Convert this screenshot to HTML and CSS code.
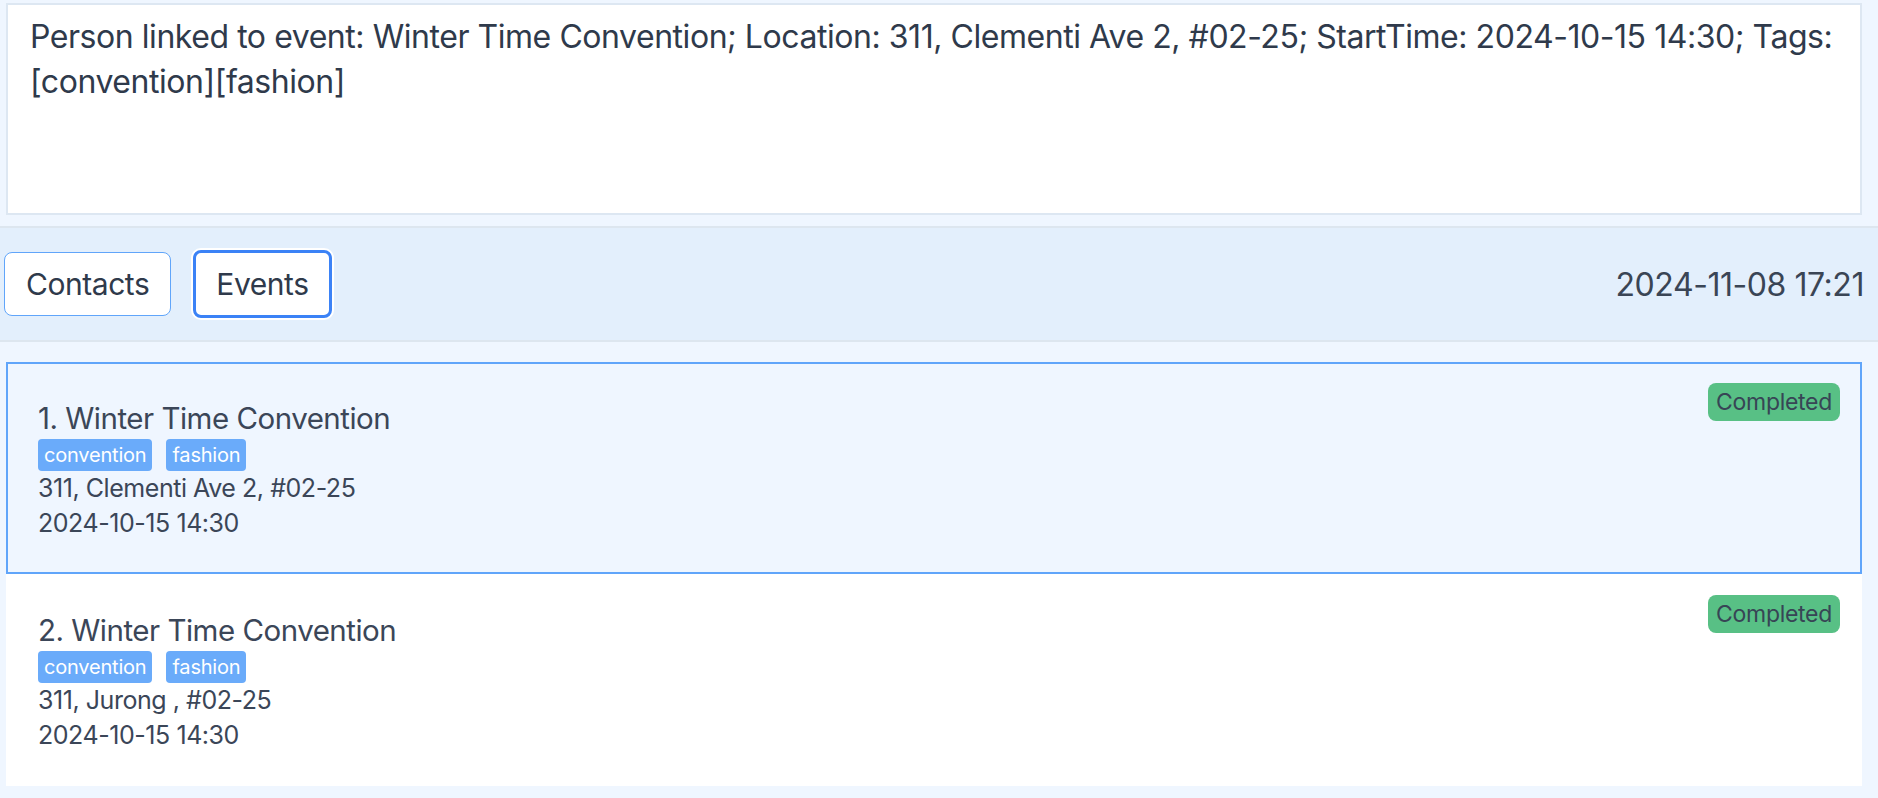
FILE: index.html
```html
<!DOCTYPE html>
<html>
<head>
<meta charset="utf-8">
<link rel="stylesheet" href="styles.css">
</head>
<body>
<div class="app">
  <div class="result-wrap">
    <div class="result">Person linked to event: Winter Time Convention; Location: 311, Clementi Ave 2, #02-25; StartTime: 2024-10-15 14:30; Tags: [convention][fashion]</div>
  </div>
  <div class="band">
    <div class="tabs">
      <button class="tab">Contacts</button>
      <button class="tab tab-active">Events</button>
    </div>
    <div class="clock">2024-11-08 17:21</div>
  </div>
  <div class="list">
    <div class="card card-selected">
      <div class="card-main">
        <div class="title">1. Winter Time Convention</div>
        <div class="tags"><span class="tag">convention</span><span class="tag">fashion</span></div>
        <div class="line">311, Clementi Ave 2, #02-25</div>
        <div class="line">2024-10-15 14:30</div>
      </div>
      <span class="badge">Completed</span>
    </div>
    <div class="card">
      <div class="card-main">
        <div class="title">2. Winter Time Convention</div>
        <div class="tags"><span class="tag">convention</span><span class="tag">fashion</span></div>
        <div class="line">311, Jurong , #02-25</div>
        <div class="line">2024-10-15 14:30</div>
      </div>
      <span class="badge">Completed</span>
    </div>
  </div>
</div>
</body>
</html>
```

FILE: styles.css
```css
*, *::before, *::after {
  box-sizing: border-box;
}
html, body {
  margin: 0;
  padding: 0;
}
body {
  background: #eff6ff;
  font-family: Inter, "Noto Sans", sans-serif;
  color: #334155;
  width: 1878px;
  height: 798px;
  overflow: hidden;
}
.app {
  display: flex;
  flex-direction: column;
}
.result-wrap {
  padding: 3px 16px 11px 6px;
}
.result {
  height: 212px;
  background: #ffffff;
  border: 2px solid #dde7f2;
  padding: 9px 22px;
  font-size: 32px;
  line-height: 45px;
  letter-spacing: -0.45px;
  color: #2f3a4b;
}
.band {
  background: #e3effc;
  border-top: 2px solid #dde6ef;
  border-bottom: 2px solid #dde6ef;
  height: 116px;
  display: flex;
  align-items: center;
  justify-content: space-between;
  padding: 0 14px 0 4px;
}
.tabs {
  display: flex;
  gap: 22px;
  align-items: center;
}
.tab {
  font-family: Inter, "Noto Sans", sans-serif;
  font-size: 30px;
  letter-spacing: -0.45px;
  color: #2f3a4b;
  background: #ffffff;
  border: 1.5px solid #60a5fa;
  border-radius: 8px;
  height: 64px;
  padding: 0 21px;
}
.tab-active {
  height: 68px;
  border: 3px solid #3b82f6;
  box-shadow: 0 0 0 2px #ffffff;
  padding: 0 20px;
}
.clock {
  font-size: 32px;
  letter-spacing: -0.45px;
  color: #3a4555;
}
.list {
  padding: 20px 16px 0 6px;
  display: flex;
  flex-direction: column;
}
.card {
  display: flex;
  justify-content: space-between;
  align-items: flex-start;
  background: #ffffff;
  border: 2px solid transparent;
  height: 212px;
  padding: 19px 20px 0 30px;
}
.card-selected {
  background: #eff6ff;
  border-color: #60a5fa;
}
.card-main {
  padding-top: 17px;
}
.title {
  font-size: 29.5px;
  line-height: 36px;
  letter-spacing: -0.5px;
  color: #3b4658;
}
.tags {
  display: flex;
  gap: 14px;
  margin-top: 3px;
  margin-bottom: 0;
}
.tag {
  background: #6aabfa;
  color: #ffffff;
  border-radius: 4px;
  font-size: 20px;
  line-height: 32px;
  padding: 0 6px;
  letter-spacing: -0.2px;
}
.line {
  font-size: 25px;
  line-height: 35px;
  letter-spacing: -0.45px;
  color: #3b4658;
}
.badge {
  background: #58c085;
  color: #374555;
  border-radius: 8px;
  font-size: 23px;
  line-height: 38px;
  padding: 0 8px;
  letter-spacing: -0.3px;
}
```
